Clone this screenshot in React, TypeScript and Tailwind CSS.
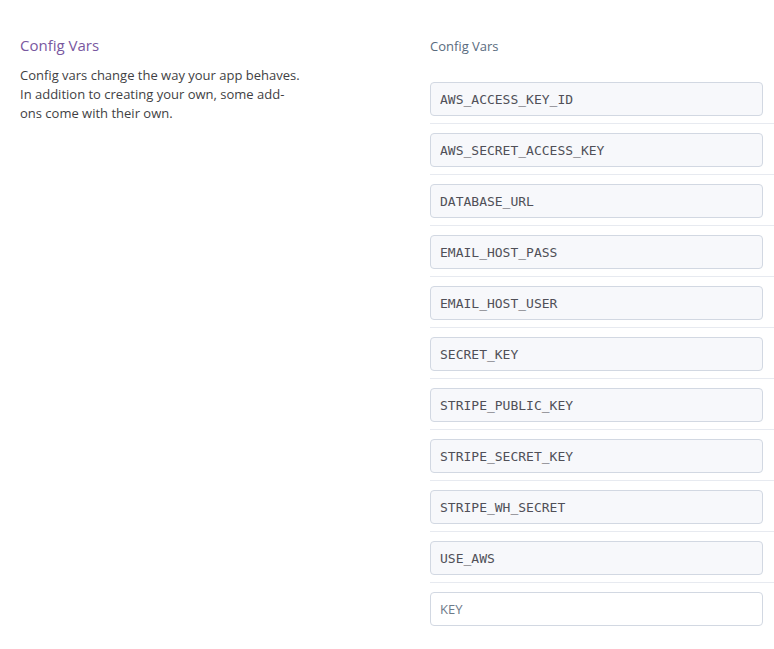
const vars = [
  'AWS_ACCESS_KEY_ID',
  'AWS_SECRET_ACCESS_KEY',
  'DATABASE_URL',
  'EMAIL_HOST_PASS',
  'EMAIL_HOST_USER',
  'SECRET_KEY',
  'STRIPE_PUBLIC_KEY',
  'STRIPE_SECRET_KEY',
  'STRIPE_WH_SECRET',
  'USE_AWS',
]

export default function App() {
  return (
    <div className="flex min-h-[649px] bg-white" style={{ fontFamily: '"Open Sans", Lato, sans-serif' }}>
      <div className="w-[430px] shrink-0 pl-5 pt-[35px]">
        <h2 className="text-[15px] leading-5 text-[#79589f]">Config Vars</h2>
        <p className="mt-[11px] w-[284px] text-[13px] leading-[19px] text-[#3f3f44]">
          Config vars change the way your app behaves. In addition to creating your own, some add-ons come with their own.
        </p>
      </div>
      <div className="flex-1 pt-[37px]">
        <div className="text-[13px] leading-[18px] text-[#596b7e]">Config Vars</div>
        <div className="mt-[27px]">
          {vars.map((v) => (
            <div key={v} className="border-b border-[#e7eaf0] pb-[7px] mb-[9px]">
              <input
                readOnly
                value={v}
                className="block h-[34px] w-[333px] rounded border border-[#d2d8e2] bg-[#f7f8fb] px-[9px] text-[13px] text-[#505058] outline-none"
                style={{ fontFamily: '"DejaVu Sans Mono", monospace' }}
              />
            </div>
          ))}
          <input
            placeholder="KEY"
            className="block h-[34px] w-[333px] rounded border border-[#d2d8e2] bg-white px-[9px] text-[13px] text-[#3f3f44] placeholder:text-[#6e7a89] outline-none"
          />
        </div>
      </div>
    </div>
  )
}
